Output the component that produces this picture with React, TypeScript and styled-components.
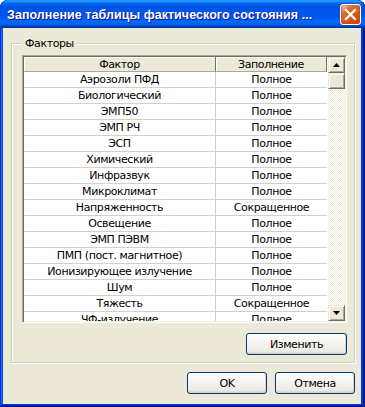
import React from 'react';
import styled, { createGlobalStyle } from 'styled-components';

const GlobalStyle = createGlobalStyle`
  html, body {
    margin: 0;
    padding: 0;
    background: #ffffff;
  }
  body {
    font-family: "DejaVu Sans", Tahoma, sans-serif;
    font-size: 11px;
  }
`;

const factors: [string, string][] = [
  ['Аэрозоли ПФД', 'Полное'],
  ['Биологический', 'Полное'],
  ['ЭМП50', 'Полное'],
  ['ЭМП РЧ', 'Полное'],
  ['ЭСП', 'Полное'],
  ['Химический', 'Полное'],
  ['Инфразвук', 'Полное'],
  ['Микроклимат', 'Полное'],
  ['Напряженность', 'Сокращенное'],
  ['Освещение', 'Полное'],
  ['ЭМП ПЭВМ', 'Полное'],
  ['ПМП (пост. магнитное)', 'Полное'],
  ['Ионизирующее излучение', 'Полное'],
  ['Шум', 'Полное'],
  ['Тяжесть', 'Сокращенное'],
  ['ЧФ-излучение', 'Полное'],
];

const App = () => {
  return (
    <>
      <GlobalStyle />
      <Window>
        <TitleBar>
          <Caption>Заполнение таблицы фактического состояния ...</Caption>
          <CloseButton aria-label="Закрыть">
            <svg width="13" height="13" viewBox="0 0 13 13">
              <path d="M2 2 L11 11 M11 2 L2 11" stroke="#fff" strokeWidth="2.2" strokeLinecap="square" />
            </svg>
          </CloseButton>
        </TitleBar>
        <Body>
          <Group>
            <Legend>Факторы</Legend>
            <Sunken>
              <Grid>
                <HeaderRow>
                  <HeaderCell>Фактор</HeaderCell>
                  <HeaderCell>Заполнение</HeaderCell>
                </HeaderRow>
                {factors.map(([name, fill]) => (
                  <Row key={name}>
                    <Cell $first>{name}</Cell>
                    <Cell>{fill}</Cell>
                  </Row>
                ))}
              </Grid>
              <ScrollBar>
                <ScrollButton>
                  <svg width="7" height="4" viewBox="0 0 7 4">
                    <path d="M3.5 0 L7 4 L0 4 Z" fill="#000" />
                  </svg>
                </ScrollButton>
                <Thumb />
                <Track />
                <ScrollButton>
                  <svg width="7" height="4" viewBox="0 0 7 4">
                    <path d="M0 0 L7 0 L3.5 4 Z" fill="#000" />
                  </svg>
                </ScrollButton>
              </ScrollBar>
            </Sunken>
            <GroupActions>
              <Button $width={101}>Изменить</Button>
            </GroupActions>
          </Group>
          <Footer>
            <Button $width={80}>OK</Button>
            <Button $width={80}>Отмена</Button>
          </Footer>
        </Body>
      </Window>
    </>
  );
};

const Window = styled.div`
  width: 365px;
  height: 407px;
  box-sizing: border-box;
  display: flex;
  flex-direction: column;
  background: #0831d9;
  border-radius: 8px 8px 0 0;
  box-shadow: inset -1px -1px #00138c, inset 1px 1px #0831d9,
    inset -2px -2px #001ea0, inset 2px 2px #166aee,
    inset -3px -3px #003bda, inset 3px 3px #0855dd;
  overflow: hidden;
`;

const TitleBar = styled.div`
  height: 28px;
  flex-shrink: 0;
  display: flex;
  align-items: center;
  justify-content: space-between;
  padding: 0 4px 0 7px;
  background: linear-gradient(
    180deg,
    #0997ff 0%,
    #3a93ff 4%,
    #288eff 6%,
    #127dff 8%,
    #036ffc 10%,
    #0262ee 14%,
    #0057e5 20%,
    #0054e3 24%,
    #0055eb 56%,
    #005bf5 66%,
    #026afe 76%,
    #0062ef 86%,
    #0052d6 92%,
    #0040ab 94%,
    #003092 100%
  );
  border-radius: 8px 8px 0 0;
`;

const Caption = styled.span`
  color: #ffffff;
  font-family: "Liberation Sans", Arial, sans-serif;
  font-weight: bold;
  font-size: 12.5px;
  letter-spacing: 0.05px;
  text-shadow: 1px 1px #0f1089;
  white-space: nowrap;
  margin-top: 1px;
`;

const CloseButton = styled.button`
  width: 21px;
  height: 21px;
  padding: 0;
  display: flex;
  align-items: center;
  justify-content: center;
  border: 1px solid #ffffff;
  border-radius: 3px;
  background-image: radial-gradient(
    circle at 90% 90%,
    #cc4600 0%,
    #dc6527 55%,
    #cd7546 70%,
    #ffccb2 90%,
    #ffffff 100%
  );
  box-shadow: inset 0 -1px 2px 1px #da4600;
  margin-top: 1px;
`;

const Body = styled.div`
  flex: 1;
  display: flex;
  flex-direction: column;
  margin: 0 4px 3px 3px;
  padding: 0 6px 9px 8px;
  background: #ece9d8;
  color: #000000;
`;

const Group = styled.fieldset`
  margin: 9px 0 0 0;
  padding: 5px 7px 7px 10px;
  border: 1px solid #d0d0bf;
  box-shadow: inset 1px 1px #ffffff, 1px 1px #ffffff;
  display: flex;
  flex-direction: column;
`;

const Legend = styled.legend`
  padding: 0 3px;
  line-height: 13px;
  font-size: 11px;
  letter-spacing: -0.4px;
  background: #ece9d8;
`;

const Sunken = styled.div`
  height: 268px;
  box-sizing: border-box;
  display: flex;
  border: 1px solid;
  border-color: #aca899 #ffffff #ffffff #aca899;
  padding: 1px;
  box-shadow: inset 1px 1px #716f64, inset -1px -1px #f1efe2;
  background: #ffffff;
`;

const Grid = styled.div`
  flex: 1;
  overflow: hidden;
  display: flex;
  flex-direction: column;
`;

const HeaderRow = styled.div`
  display: grid;
  grid-template-columns: 192px 111px;
  height: 15px;
  flex-shrink: 0;
`;

const HeaderCell = styled.div`
  display: flex;
  align-items: center;
  justify-content: center;
  background: #ece9d8;
  border-right: 1px solid #716f64;
  border-bottom: 1px solid #aca899;
  box-shadow: inset 1px 1px #ffffff;
  letter-spacing: -0.4px;
  white-space: nowrap;
`;

const Row = styled.div`
  display: grid;
  grid-template-columns: 192px 111px;
  height: 16px;
  flex-shrink: 0;
`;

const Cell = styled.div<{ $first?: boolean }>`
  display: flex;
  align-items: center;
  justify-content: center;
  box-sizing: border-box;
  border-bottom: 1px solid #d4d0c8;
  border-right: ${(p) => (p.$first ? '1px solid #d4d0c8' : 'none')};
  letter-spacing: -0.4px;
  white-space: nowrap;
`;

const ScrollBar = styled.div`
  width: 17px;
  flex-shrink: 0;
  display: flex;
  flex-direction: column;
`;

const ScrollButton = styled.div`
  height: 16px;
  box-sizing: border-box;
  flex-shrink: 0;
  display: flex;
  align-items: center;
  justify-content: center;
  background: #ece9d8;
  border: 1px solid;
  border-color: #ece9d8 #716f64 #716f64 #ece9d8;
  box-shadow: inset 1px 1px #ffffff, inset -1px -1px #aca899;
`;

const Thumb = styled(ScrollButton)``;

const Track = styled.div`
  flex: 1;
  background-color: #ffffff;
  background-image: repeating-conic-gradient(#ece9d8 0 25%, #ffffff 0 50%);
  background-size: 2px 2px;
`;

const GroupActions = styled.div`
  display: flex;
  justify-content: flex-end;
  margin-top: 10px;
`;

const Footer = styled.div`
  display: flex;
  justify-content: flex-end;
  gap: 8px;
  margin-top: 9px;
`;

const Button = styled.button<{ $width: number }>`
  width: ${(p) => p.$width}px;
  height: 22px;
  padding: 0;
  font-family: "DejaVu Sans", Tahoma, sans-serif;
  font-size: 11px;
  letter-spacing: -0.4px;
  color: #000000;
  border: 1px solid #003c74;
  border-radius: 3px;
  background: linear-gradient(180deg, #ffffff 0%, #f4f3ee 50%, #ecebe6 86%, #d6d0c5 100%);
  box-shadow: inset -1px -1px #d6d0c5;
`;

export default App;
